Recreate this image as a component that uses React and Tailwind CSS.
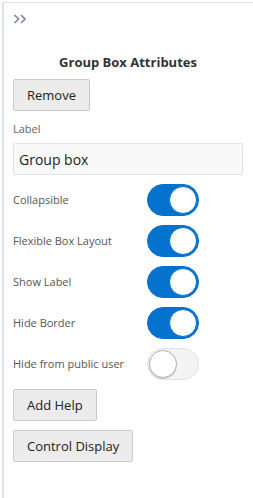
import React from "react";

const options = [
  { label: "Collapsible", on: true },
  { label: "Flexible Box Layout", on: true },
  { label: "Show Label", on: true },
  { label: "Hide Border", on: true },
  { label: "Hide from public user", on: false },
];

const Toggle = ({ on }) => (
  <div
    className={
      "relative w-[52px] h-[32px] rounded-full border " +
      (on ? "bg-[#0572ce] border-[#0572ce]" : "bg-[#f4f4f4] border-[#e2e2e2]")
    }
  >
    <div
      className={
        "absolute top-[1px] w-[28px] h-[28px] rounded-full bg-white border " +
        (on ? "right-[1px] border-[#0572ce]" : "left-[1px] border-[#b3b3b3] shadow-[0_1px_1px_rgba(0,0,0,0.15)]")
      }
    />
  </div>
);

const Button = ({ children }) => (
  <button className="h-[32px] px-[13px] bg-[#ececec] border border-[#c9c9c9] rounded-[2px] text-[13px] text-[#222] leading-none">
    {children}
  </button>
);

export default function App() {
  return (
    <div className="w-[253px] h-[498px] bg-white overflow-hidden font-['Open_Sans',sans-serif]">
      <div className="ml-[2px] mt-[2px] h-[496px] border-l-2 border-t border-[#dbe4ee] pl-[9px] pr-[10px]">
        <div className="pt-[11px] h-[40px]">
          <svg width="14" height="10" viewBox="0 0 14 10" fill="none" stroke="#7d8a99" strokeWidth="1.7">
            <polyline points="1.5,1 5.5,5 1.5,9" />
            <polyline points="8,1 12,5 8,9" />
          </svg>
        </div>
        <h2 className="mt-[10px] text-center font-bold text-[13px] text-[#333] leading-[18px]">
          Group Box Attributes
        </h2>
        <div className="mt-[8px]">
          <Button>Remove</Button>
        </div>
        <div className="mt-[10px] text-[11px] text-[#666] leading-[16px]">Label</div>
        <div className="mt-[6px] h-[32px] border border-[#e3e3e3] bg-[#f9f9f9] rounded-[2px] flex items-center px-[5px] text-[14px] text-[#222]">
          Group box
        </div>
        <div className="mt-[9px] flex flex-col gap-[9px]">
          {options.map((o) => (
            <div key={o.label} className="flex items-center h-[32px]">
              <span className="w-[134px] text-[11px] text-[#555]">{o.label}</span>
              <Toggle on={o.on} />
            </div>
          ))}
        </div>
        <div className="mt-[9px]">
          <Button>Add Help</Button>
        </div>
        <div className="mt-[9px]">
          <Button>Control Display</Button>
        </div>
      </div>
    </div>
  );
}
